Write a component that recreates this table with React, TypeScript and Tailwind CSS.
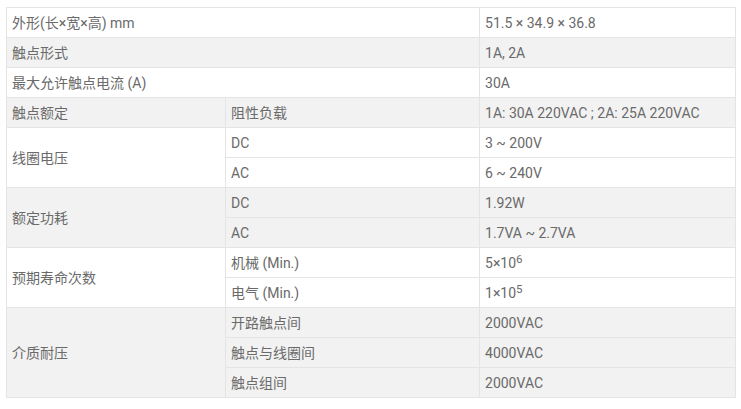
import React from "react";

const W = "bg-white";
const G = "bg-[#f2f2f2]";
const td = "border border-[#e4e4e4] px-[5px] py-0 align-middle text-left font-normal";
const sup = "text-[11.5px] relative -top-[4.5px]";

export default function App() {
  return (
    <div className="bg-white w-[741px] h-[409px] pt-[7px] pl-[6px]" style={{ fontFamily: 'Roboto, "Noto Sans CJK SC", sans-serif' }}>
      <table className="border-collapse w-[729px] table-fixed text-[14px] text-[#6a6a6a] leading-[20px]">
        <colgroup>
          <col className="w-[219px]" />
          <col className="w-[254px]" />
          <col className="w-[256px]" />
        </colgroup>
        <tbody>
          <tr className={`h-[30px] ${W}`}>
            <td className={td} colSpan={2}>外形(长×宽×高) mm</td>
            <td className={td}>51.5 × 34.9 × 36.8</td>
          </tr>
          <tr className={`h-[30px] ${G}`}>
            <td className={td} colSpan={2}>触点形式</td>
            <td className={td}>1A, 2A</td>
          </tr>
          <tr className={`h-[30px] ${W}`}>
            <td className={td} colSpan={2}>最大允许触点电流 (A)</td>
            <td className={td}>30A</td>
          </tr>
          <tr className={`h-[30px] ${G}`}>
            <td className={td}>触点额定</td>
            <td className={td}>阻性负载</td>
            <td className={td}>1A: 30A 220VAC ; 2A: 25A 220VAC</td>
          </tr>
          <tr className={`h-[30px] ${W}`}>
            <td className={td} rowSpan={2}>线圈电压</td>
            <td className={td}>DC</td>
            <td className={td}>3 ~ 200V</td>
          </tr>
          <tr className={`h-[30px] ${W}`}>
            <td className={td}>AC</td>
            <td className={td}>6 ~ 240V</td>
          </tr>
          <tr className={`h-[30px] ${G}`}>
            <td className={td} rowSpan={2}>额定功耗</td>
            <td className={td}>DC</td>
            <td className={td}>1.92W</td>
          </tr>
          <tr className={`h-[30px] ${G}`}>
            <td className={td}>AC</td>
            <td className={td}>1.7VA ~ 2.7VA</td>
          </tr>
          <tr className={`h-[30px] ${W}`}>
            <td className={td} rowSpan={2}>预期寿命次数</td>
            <td className={td}>机械 (Min.)</td>
            <td className={td}>5×10<sup className={sup}>6</sup></td>
          </tr>
          <tr className={`h-[30px] ${W}`}>
            <td className={td}>电气 (Min.)</td>
            <td className={td}>1×10<sup className={sup}>5</sup></td>
          </tr>
          <tr className={`h-[30px] ${G}`}>
            <td className={td} rowSpan={3}>介质耐压</td>
            <td className={td}>开路触点间</td>
            <td className={td}>2000VAC</td>
          </tr>
          <tr className={`h-[30px] ${G}`}>
            <td className={td}>触点与线圈间</td>
            <td className={td}>4000VAC</td>
          </tr>
          <tr className={`h-[30px] ${G}`}>
            <td className={td}>触点组间</td>
            <td className={td}>2000VAC</td>
          </tr>
        </tbody>
      </table>
    </div>
  );
}
